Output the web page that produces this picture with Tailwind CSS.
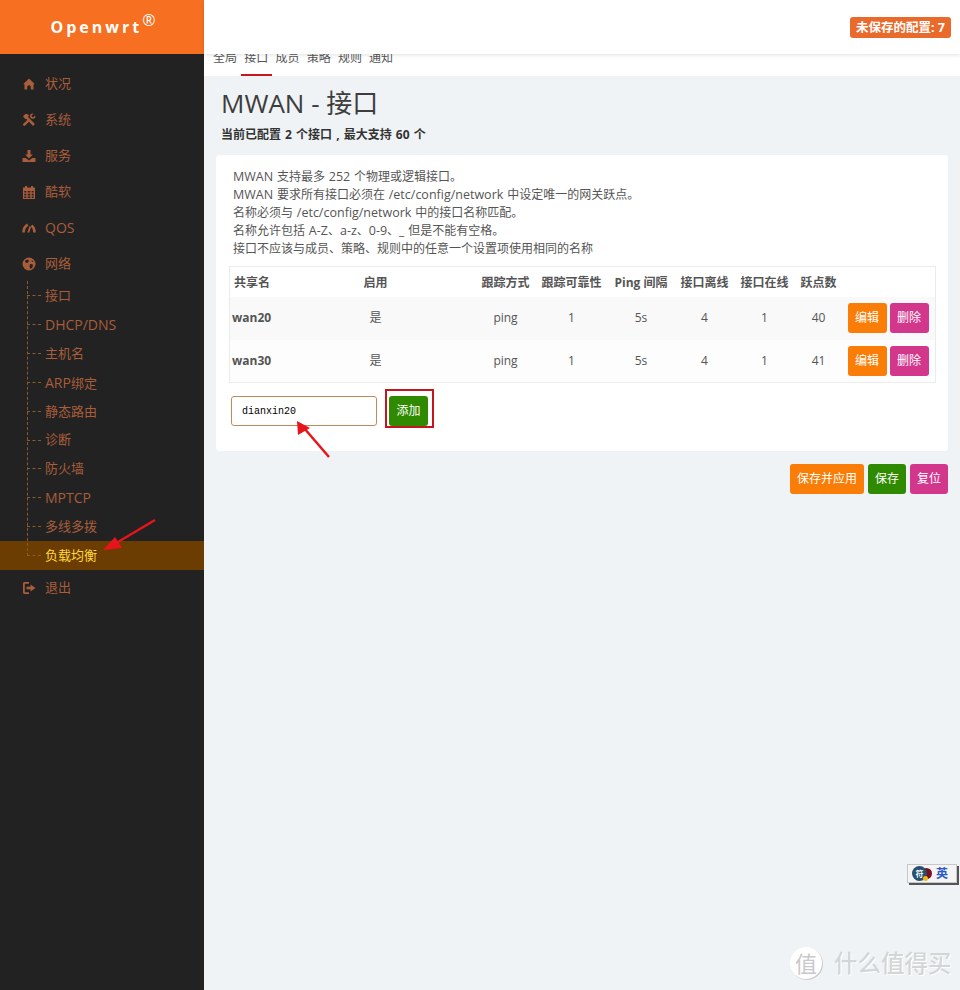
<!DOCTYPE html>
<html lang="en">

<head>
  <meta charset="UTF-8">
  <meta name="viewport" content="width=device-width, initial-scale=1.0">
  <title>Openwrt - MWAN</title>
  <script src="https://cdn.jsdelivr.net/npm/@tailwindcss/browser@4"></script>
</head>

<body class="bg-[#eff3f5]">
  <div class="relative flex w-[960px] h-[990px] overflow-hidden font-['Open_Sans','Noto_Sans_CJK_SC',sans-serif] text-[13px] text-[#444]">

    <!-- sidebar -->
    <aside class="w-[204px] shrink-0 bg-[#222222] text-[#a85d3b]">
      <div class="flex justify-center h-[54px] pl-[2px] bg-[#f76f20] text-white font-bold text-[16px] tracking-[3px] leading-[54px]">
        Openwrt<span class="text-[16px] font-normal tracking-normal leading-[40px]">®</span>
      </div>

      <nav class="pt-[12px]">
        <a class="flex items-center h-[36px] pl-[22px] gap-[9px]">
          <svg class="w-[14px] h-[14px]" viewBox="0 0 14 14" fill="currentColor"><path d="M7 1.500 12.500 6.800 11.900 7.600 11.500 7.300V12.500H8.800V10A1.800 1.800 0 0 0 5.200 10V12.500H2.500V7.300L2.100 7.600 1.500 6.800z"/></svg>
          <span>状况</span>
        </a>
        <a class="flex items-center h-[36px] pl-[22px] gap-[9px]">
          <svg class="w-[14px] h-[14px]" viewBox="0 0 14 14" fill="currentColor"><path d="M1 3.300 3.600 .8 7.400 2 6.300 3.100 6.300 4.300 12.900 11 11 12.900 4.500 6.100 3.200 6.100 2.400 5z"/><path d="M13.300 2.300 11.300 4.200 9.900 3.900 9.600 2.600 11.500 .7C9.500 .1 7.800 1.600 8 3.500L7.700 3.800 9.900 6 10.300 5.700C12.300 6.200 14 4.400 13.300 2.300zM5.500 6.700 1.100 11.100C.5 11.800 2.100 13.400 2.800 12.800L7.300 8.500z"/></svg>
          <span>系统</span>
        </a>
        <a class="flex items-center h-[36px] pl-[22px] gap-[9px]">
          <svg class="w-[14px] h-[14px]" viewBox="0 0 14 14" fill="currentColor"><path d="M5.500 1h3v4.500h2.400L7 9.600 3.100 5.500h2.400z"/><path d="M.5 9h3.200L7 11.500 10.300 9h3.200v4h-13z"/></svg>
          <span>服务</span>
        </a>
        <a class="flex items-center h-[36px] pl-[22px] gap-[9px]">
          <svg class="w-[14px] h-[14px]" viewBox="0 0 14 14" fill="currentColor" fill-rule="evenodd"><path d="M1 2.500h2V1h2v1.500h4V1h2v1.500h2V14H1zM2.300 6v1.600h2V6zm3.400 0v1.600h2.600V6zm4 0v1.600h2V6zM2.300 8.800v1.600h2V8.800zm3.400 0v1.600h2.600V8.800zm4 0v1.600h2V8.800zM2.300 11.500v1.400h2v-1.400zm3.400 0v1.400h2.600v-1.400zm4 0v1.400h2v-1.400z"/></svg>
          <span>酷软</span>
        </a>
        <a class="flex items-center h-[36px] pl-[22px] gap-[9px]">
          <svg class="w-[14px] h-[14px]" viewBox="0 0 14 14" fill="none" stroke="currentColor"><path d="M1.500 11.500C1.500 8 3 5 5.800 3.700" stroke-width="2.600"/><path d="M12.500 11.500C12.500 8.500 11.500 6 9.500 4.500" stroke-width="2.600"/><path d="M6.300 11.500 8.300 5.500" stroke-width="1.800"/></svg>
          <span class="text-[14px] -mt-[1px]">QOS</span>
        </a>
        <a class="flex items-center h-[36px] pl-[22px] gap-[9px]">
          <svg class="w-[14px] h-[14px]" viewBox="0 0 14 14"><circle cx="7" cy="7" r="6.500" fill="currentColor"/><path d="M3 3.500 6 2.500 7 4 5.500 6 3.500 5.500zM8 7l3 .5-.5 3L8.500 12 7.500 9.500zM9.500 3l2 1.500-1.500.5z" fill="#222222"/></svg>
          <span>网络</span>
        </a>

        <!-- network submenu -->
        <ul class="relative -mt-[1px]">
          <li class="absolute left-[27px] top-0 bottom-[14px] border-l border-dashed border-[#8a5a2c]"></li>
          <li class="flex items-center h-[29px] pl-[27px] gap-[4px]"><i class="w-[14px] border-t border-dashed border-[#8a5a2c]"></i>接口</li>
          <li class="flex items-center h-[29px] pl-[27px] gap-[4px]"><i class="w-[14px] border-t border-dashed border-[#8a5a2c]"></i><span class="text-[14px]">DHCP/DNS</span></li>
          <li class="flex items-center h-[29px] pl-[27px] gap-[4px]"><i class="w-[14px] border-t border-dashed border-[#8a5a2c]"></i>主机名</li>
          <li class="flex items-center h-[29px] pl-[27px] gap-[4px]"><i class="w-[14px] border-t border-dashed border-[#8a5a2c]"></i><span><span class="text-[14px]">ARP</span>绑定</span></li>
          <li class="flex items-center h-[29px] pl-[27px] gap-[4px]"><i class="w-[14px] border-t border-dashed border-[#8a5a2c]"></i>静态路由</li>
          <li class="flex items-center h-[28px] pl-[27px] gap-[4px]"><i class="w-[14px] border-t border-dashed border-[#8a5a2c]"></i>诊断</li>
          <li class="flex items-center h-[29px] pl-[27px] gap-[4px]"><i class="w-[14px] border-t border-dashed border-[#8a5a2c]"></i>防火墙</li>
          <li class="flex items-center h-[29px] pl-[27px] gap-[4px]"><i class="w-[14px] border-t border-dashed border-[#8a5a2c]"></i><span class="text-[14px]">MPTCP</span></li>
          <li class="flex items-center h-[29px] pl-[27px] gap-[4px]"><i class="w-[14px] border-t border-dashed border-[#8a5a2c]"></i>多线多拨</li>
          <li class="flex items-center h-[29px] pl-[27px] gap-[4px] bg-[#6b3d03] text-[#ffd83a]"><i class="w-[14px] border-t border-dashed border-[#8a5a2c]"></i>负载均衡</li>
        </ul>

        <a class="flex items-center h-[36px] pl-[22px] gap-[9px]">
          <svg class="w-[14px] h-[14px]" viewBox="0 0 14 14" fill="currentColor"><path d="M1 2.500C1 1.700 1.700 1 2.500 1H7v1.800H2.800v8.400H7V13H2.500C1.700 13 1 12.300 1 11.500z"/><path d="M8.500 3.500 13.500 7l-5 3.500V8.300H4.500V5.700h4z"/></svg>
          <span>退出</span>
        </a>
      </nav>
    </aside>

    <!-- main -->
    <main class="flex-1 min-w-0">
      <header class="relative z-10 flex items-center justify-end h-[54px] pr-[9px] bg-white shadow-[0_1px_4px_rgba(0,0,0,0.12)]">
        <span class="h-[21px] px-[6px] rounded-[3px] bg-[#ea6a2c] text-white text-[12.500px] font-bold leading-[21px]">未保存的配置: 7</span>
      </header>

      <div class="flex h-[26px] -mt-[4px] pl-[5.500px] bg-white text-[12px] leading-[16px] text-[#555]">
        <a class="px-[3.600px]">全局</a>
        <a class="px-[3.600px] border-b-2 border-[#c9161d]">接口</a>
        <a class="px-[3.600px]">成员</a>
        <a class="px-[3.600px]">策略</a>
        <a class="px-[3.600px]">规则</a>
        <a class="px-[3.600px]">通知</a>
      </div>

      <h1 class="mt-[11px] pl-[17px] text-[26px] leading-[32px] text-[#3d3d3d]">MWAN - 接口</h1>
      <p class="mt-[7px] pl-[17px] text-[12px] leading-[18px] font-bold text-[#333] [word-spacing:1px]">当前已配置 2 个接口 , 最大支持 60 个</p>

      <section class="mt-[11px] ml-[12px] w-[732px] h-[296px] px-[13px] pt-[13px] rounded-[4px] bg-white">
        <div class="pl-[4px] text-[12px] leading-[18px] text-[#555] [word-spacing:0.700px]">
          <p><span class="text-[12.500px]">MWAN</span> 支持最多 <span class="text-[12.500px]">252</span> 个物理或逻辑接口。</p>
          <p><span class="text-[12.500px]">MWAN</span> 要求所有接口必须在 <span class="text-[12.500px]">/etc/config/network</span> 中设定唯一的网关跃点。</p>
          <p>名称必须与 <span class="text-[12.500px]">/etc/config/network</span> 中的接口名称匹配。</p>
          <p>名称允许包括 <span class="text-[12.500px]">A-Z</span>、<span class="text-[12.500px]">a-z</span>、<span class="text-[12.500px]">0-9</span>、_ 但是不能有空格。</p>
          <p>接口不应该与成员、策略、规则中的任意一个设置项使用相同的名称</p>
        </div>

        <table class="mt-[8px] w-[706px] table-fixed border border-[#e9ecec] text-[12px] text-center text-[#555]">
          <colgroup>
            <col class="w-[46px]"><col class="w-[200px]"><col class="w-[60px]"><col class="w-[72px]"><col class="w-[67px]"><col class="w-[60px]"><col class="w-[60px]"><col class="w-[48px]"><col class="w-[93px]">
          </colgroup>
          <thead>
            <tr class="h-[30px] font-bold whitespace-nowrap">
              <th class="text-left pl-[4px] pt-[2px]">共享名</th>
              <th class="pt-[2px]">启用</th>
              <th class="pt-[2px]">跟踪方式</th>
              <th class="pt-[2px]">跟踪可靠性</th>
              <th class="pt-[2px]">Ping 间隔</th>
              <th class="pt-[2px]">接口离线</th>
              <th class="pt-[2px]">接口在线</th>
              <th class="pt-[2px]">跃点数</th>
              <th></th>
            </tr>
          </thead>
          <tbody>
            <tr class="h-[43px] bg-[#f9f9f9]">
              <td class="text-left pl-[2px] font-bold">wan20</td>
              <td>是</td>
              <td>ping</td>
              <td>1</td>
              <td>5s</td>
              <td>4</td>
              <td>1</td>
              <td>40</td>
              <td class="whitespace-nowrap pl-[5px] text-left">
                <button class="w-[39px] h-[30px] rounded-[3px] bg-[#f97d06] text-white">编辑</button>
                <button class="w-[39px] h-[30px] rounded-[3px] bg-[#d3378c] text-white">删除</button>
              </td>
            </tr>
            <tr class="h-[43px] bg-[#fcfdfc]">
              <td class="text-left pl-[2px] font-bold">wan30</td>
              <td>是</td>
              <td>ping</td>
              <td>1</td>
              <td>5s</td>
              <td>4</td>
              <td>1</td>
              <td>41</td>
              <td class="whitespace-nowrap pl-[5px] text-left">
                <button class="w-[39px] h-[30px] rounded-[3px] bg-[#f97d06] text-white">编辑</button>
                <button class="w-[39px] h-[30px] rounded-[3px] bg-[#d3378c] text-white">删除</button>
              </td>
            </tr>
          </tbody>
        </table>

        <div class="flex items-start mt-[6px] pl-[2px]">
          <input value="dianxin20" class="mt-[7px] w-[146px] h-[30px] pl-[10px] rounded-[3px] border border-[#c08a5c] bg-white font-['Liberation_Mono',monospace] text-[10px] text-black">
          <div class="ml-[8px] w-[49px] h-[39px] pt-[5px] pl-[2px] border-2 border-[#c4161c]">
            <button class="w-[39px] h-[30px] rounded-[3px] bg-[#2f8a00] text-white text-[12px]">添加</button>
          </div>
        </div>
      </section>

      <div class="flex justify-end gap-[4px] mt-[13px] mr-[12px] text-[12px] text-white">
        <button class="w-[74px] h-[30px] rounded-[3px] bg-[#f97d06]">保存并应用</button>
        <button class="w-[38px] h-[30px] rounded-[3px] bg-[#2f8a00]">保存</button>
        <button class="w-[38px] h-[30px] rounded-[3px] bg-[#d3378c]">复位</button>
      </div>
    </main>

    <!-- annotation arrows -->
    <svg class="absolute left-0 top-0 w-[960px] h-[990px] pointer-events-none" viewBox="0 0 960 990">
      <path d="M155 520 118 542" stroke="#e8141c" stroke-width="2.500" fill="none"/>
      <path d="M103 550 115 537 122 548z" fill="#e8141c"/>
      <path d="M329 457 304 428" stroke="#e8141c" stroke-width="2.500" fill="none"/>
      <path d="M297 421 298 435 310 428z" fill="#e8141c"/>
    </svg>

    <!-- ime widget -->
    <div class="absolute left-[907px] top-[864px] flex items-center w-[50px] h-[19px] pl-[4px] gap-[4px] bg-[#f4f4f4] border border-[#c8c8c8] shadow-[2px_2px_0_#555] text-[12px] font-bold text-[#2a58c8] leading-none">
      <span class="relative w-[20px] h-[15px]">
        <span class="absolute right-0 top-[2px] w-[11px] h-[11px] rounded-full bg-[#7a1020]"></span>
        <span class="absolute left-0 top-0 flex items-center justify-center w-[15px] h-[15px] rounded-full bg-[#27506e] text-[8px] text-white">符</span>
        <span class="absolute left-[11px] top-[10px] w-[5px] h-[5px] rounded-full bg-[#f2b91d]"></span>
      </span>
      <span>英</span>
    </div>

    <!-- watermark -->
    <div class="absolute left-[790px] top-[947px] flex items-center gap-[12px] text-[#d3d6d7]">
      <span class="flex items-center justify-center w-[32px] h-[32px] rounded-full bg-white text-[22px] text-[#c9c9c9] shadow-[1px_1px_0_#ccc]">值</span>
      <span class="text-[23.500px] font-medium leading-[32px] drop-shadow-[1px_1px_0_#fff]">什么值得买</span>
    </div>
  </div>
</body>

</html>
